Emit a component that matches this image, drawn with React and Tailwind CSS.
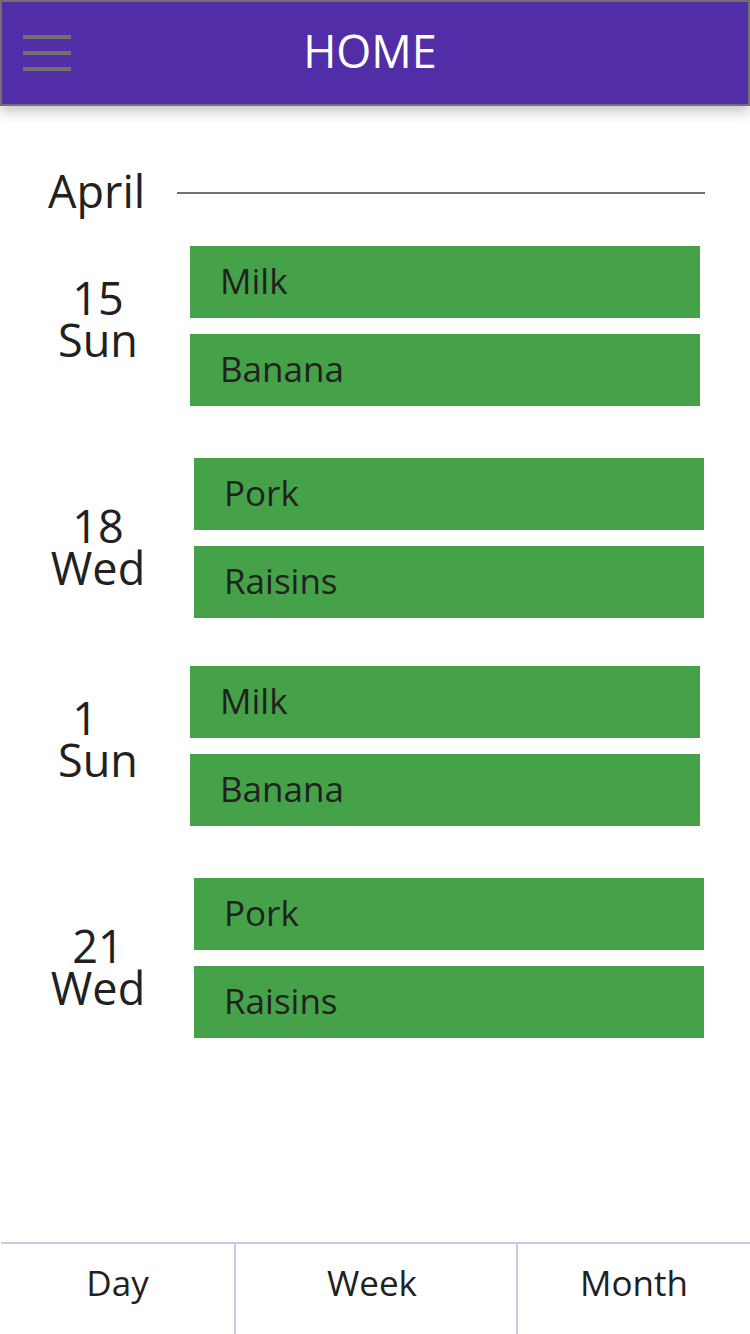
const days = [
  { num: "15", day: "Sun", items: ["Milk", "Banana"], even: false },
  { num: "18", day: "Wed", items: ["Pork", "Raisins"], even: true },
  { num: "1", day: "Sun", items: ["Milk", "Banana"], even: false },
  { num: "21", day: "Wed", items: ["Pork", "Raisins"], even: true },
];

function DayGroup({ num, day, items, even }) {
  return (
    <li className={even ? "flex pr-[46px] pb-12" : "flex pr-[50px] pb-[52px]"}>
      <div
        className={
          even
            ? "flex w-[194px] shrink-0 justify-center pt-[47px] pl-0.5"
            : "flex w-[190px] shrink-0 justify-center pt-[31px] pl-1.5"
        }
      >
        <h3 className="text-[45px] leading-[42px]">
          <span className="mx-auto block w-[2ch]">{num}</span>
          <span className="block">{day}</span>
        </h3>
      </div>
      <ul className="flex min-w-0 flex-1 flex-col gap-4">
        {items.map((item) => (
          <li key={item} className="flex h-[72px] items-center bg-[#45a249] px-[30px] pb-0.5 text-[35px] leading-10">
            {item}
          </li>
        ))}
      </ul>
    </li>
  );
}

export default function App() {
  return (
    <div className="flex min-h-screen flex-col bg-white font-['Open_Sans','Noto_Sans',sans-serif] text-[#212121]">
      <header className="grid h-[106px] grid-cols-[1fr_auto_1fr] items-center border-2 border-[#707070] bg-[#512da8] shadow-[0_6px_12px_rgba(0,0,0,0.22)]">
        <button type="button" aria-label="Open menu" className="ml-[21px] flex w-12 flex-col gap-3">
          <span className="h-1 bg-[#707070]" />
          <span className="h-1 bg-[#707070]" />
          <span className="h-1 bg-[#707070]" />
        </button>
        <h1 className="pr-2.5 pb-1 text-[45px] leading-[60px] text-white">HOME</h1>
      </header>
      <main className="flex-1">
        <div className="flex items-center pt-[60px] pr-[45px] pl-12">
          <h2 className="w-[129px] pb-1 text-[45px] leading-[50px]">April</h2>
          <hr className="flex-1 border-t-2 border-[#707070]" />
        </div>
        <ul className="pt-[26px]">
          {days.map((d) => (
            <DayGroup key={d.num} {...d} />
          ))}
        </ul>
      </main>
      <nav className="ml-px grid h-[92px] grid-cols-[233fr_284fr_232fr] border-t-2 border-[#d1c4e9] text-[35px]">
        <button type="button" className="pb-3">Day</button>
        <button type="button" className="border-x-2 border-[#d1c4e9] pr-2 pb-3">Week</button>
        <button type="button" className="pb-3">Month</button>
      </nav>
    </div>
  );
}
